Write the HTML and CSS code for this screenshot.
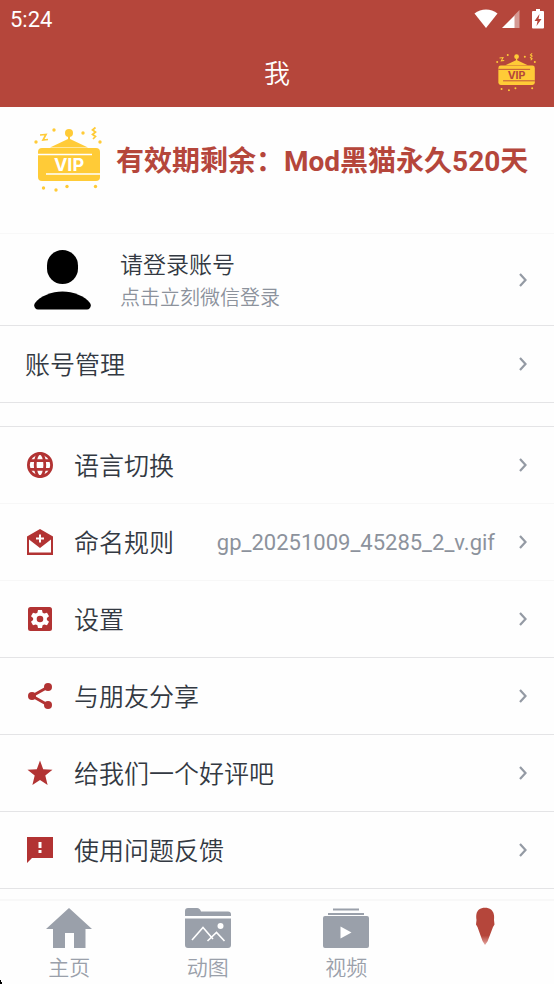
FILE: index.html
```html
<!DOCTYPE html>
<html lang="zh-CN">
<head>
<meta charset="utf-8">
<meta name="viewport" content="width=device-width, initial-scale=1">
<title>我</title>
<link rel="stylesheet" href="styles.css">
</head>
<body>
<svg class="defs" aria-hidden="true">
  <symbol id="vip" viewBox="0 0 68 66">
    <g fill="currentColor">
      <circle cx="35" cy="7" r="4"/>
      <path d="M34 10h2v3l18 8.500H16L34 13z"/>
      <rect x="4" y="22" width="62" height="33" rx="4"/>
      <circle cx="2" cy="16" r="1.700"/><circle cx="20" cy="4" r="1.700"/><circle cx="49" cy="7" r="1.700"/><circle cx="66" cy="16" r="1.700"/>
      <circle cx="9.500" cy="62" r="1.700"/><circle cx="22" cy="64" r="1.700"/><circle cx="33" cy="60.500" r="1.700"/><circle cx="61.500" cy="60.500" r="1.700"/>
    </g>
    <path d="M6 9l6-.5-3 5.500 5-.5M61.500 1.500l-3 2.500 3 2-3 2.500 3 2-2.500 2.500" fill="none" stroke="currentColor" stroke-width="1.700"/>
    <path class="vip-cut-line" d="M4 28.500h54M12 48h54"/>
  </symbol>
  <symbol id="chevron" viewBox="0 0 8 14"><path d="M1 1l5.500 6L1 13" fill="none" stroke="currentColor" stroke-width="2.200"/></symbol>
</svg>

<header class="top">
  <div class="status">
    <span>5:24</span>
    <div class="status-icons">
      <svg width="24" height="20" viewBox="0 0 24 20"><path d="M0.500 4.500C7-1 17-1 23.500 4.500L12 19z" fill="#fff"/></svg>
      <svg width="18" height="20" viewBox="0 0 18 20"><path d="M12 6.500L17.500 1v18H12z" fill="#d59a94"/><path d="M0 19L12.500 6.500V19z" fill="#fff"/></svg>
      <svg class="battery" width="12" height="20" viewBox="0 0 12 20"><path d="M4 0h4v2h3q1 0 1 1v15.500q0 1-1 1H1q-1 0-1-1V3q0-1 1-1h3z" fill="#fff"/><path d="M7.500 5L2.500 12h3L4.500 17l5-7H6.500z" fill="#b5463b"/></svg>
    </div>
  </div>
  <div class="title-bar">
    <h1>我</h1>
    <button class="vip-button" aria-label="VIP"><svg class="vip-small" viewBox="0 0 68 66"><use href="#vip"/><text class="vip-cut-text" x="35" y="44.500" text-anchor="middle">VIP</text></svg></button>
  </div>
</header>

<main>
  <section class="membership">
    <svg class="vip-large" viewBox="0 0 68 66"><use href="#vip"/><text class="vip-cut-text" x="35" y="44.500" text-anchor="middle">VIP</text></svg>
    <strong>有效期剩余：Mod黑猫永久520天</strong>
  </section>

  <a class="row account" href="#login">
    <svg class="avatar" viewBox="0 0 58 60"><rect x="13" y="0" width="31" height="34" rx="15.500"/><path d="M1 53C6 46 18 41.500 28.500 41.500S51 46 56 53C58 56 56 59.500 53 59.500H4C1 59.500-1 56 1 53z"/></svg>
    <span class="account-text"><span class="account-name">请登录账号</span><span class="account-hint">点击立刻微信登录</span></span>
    <svg class="chevron"><use href="#chevron"/></svg>
  </a>
  <a class="row" href="#manage"><span class="label">账号管理</span><svg class="chevron"><use href="#chevron"/></svg></a>

  <nav class="menu">
    <a class="row faint" href="#language">
      <svg class="icon" viewBox="0 0 26 26"><g fill="none" stroke="currentColor" stroke-width="2.800"><circle cx="13" cy="13" r="11.600"/><ellipse cx="13" cy="13" rx="4.800" ry="11.600"/><path d="M2 8.700h22M2 17.300h22"/></g></svg>
      <span class="label">语言切换</span><svg class="chevron"><use href="#chevron"/></svg>
    </a>
    <a class="row faint" href="#naming">
      <svg class="icon" viewBox="0 0 26 26"><path fill="currentColor" fill-rule="evenodd" d="M13 0l13 7.500V26H0V7.500zM2 10.500v13h22v-13L13 19zM12 5.500v3H9v2h3v3h2v-3h3v-2h-3v-3z"/></svg>
      <span class="label">命名规则</span><span class="value">gp_20251009_45285_2_v.gif</span><svg class="chevron"><use href="#chevron"/></svg>
    </a>
    <a class="row" href="#settings">
      <svg class="icon" viewBox="0 0 26 26"><rect x="1" y="1" width="24" height="24" rx="2.500" fill="currentColor"/><path fill="#fff" fill-rule="evenodd" d="M11 4h4l.6 2.700 1.600.9 2.800-.9 2 3.500-2.100 1.900v1.800l2.100 1.900-2 3.500-2.800-.9-1.600.9L15 22h-4l-.6-2.700-1.600-.9-2.800.9-2-3.500 2.100-1.900v-1.800L4 10.200l2-3.500 2.800.9 1.600-.9zM13 9.700a3.300 3.300 0 100 6.600 3.300 3.300 0 000-6.600z"/></svg>
      <span class="label">设置</span><svg class="chevron"><use href="#chevron"/></svg>
    </a>
    <a class="row" href="#share">
      <svg class="icon" viewBox="0 0 26 26"><path d="M21 4L5 13l16 9" fill="none" stroke="currentColor" stroke-width="2.800"/><g fill="currentColor"><circle cx="21" cy="4" r="4"/><circle cx="5" cy="13" r="4"/><circle cx="21" cy="22" r="4"/></g></svg>
      <span class="label">与朋友分享</span><svg class="chevron"><use href="#chevron"/></svg>
    </a>
    <a class="row" href="#rate">
      <svg class="icon" viewBox="0 0 26 26"><path fill="currentColor" d="M13 .5l3.200 8.700 9.300.5-7.200 5.900 2.300 9.400L13 20l-7.600 5 2.300-9.400L.5 9.700l9.300-.5z"/></svg>
      <span class="label">给我们一个好评吧</span><svg class="chevron"><use href="#chevron"/></svg>
    </a>
    <a class="row" href="#feedback">
      <svg class="icon" viewBox="0 0 26 26"><path fill="currentColor" fill-rule="evenodd" d="M0 0h26v21H5l-5 5zM11.500 5v6h3V5zM11.500 13v3h3v-3z"/></svg>
      <span class="label">使用问题反馈</span><svg class="chevron"><use href="#chevron"/></svg>
    </a>
  </nav>
</main>

<nav class="tabs">
  <a href="#home"><svg viewBox="0 0 46 42"><path fill="currentColor" d="M23 1l23 21h-6.500v19H28V26h-9v15H7V22H0z"/></svg>主页</a>
  <a href="#gif"><svg viewBox="0 0 46 42"><path fill="currentColor" d="M0 4q0-3 3-3h9q3 0 4 3.500h27q3 0 3 3V9H0zM0 11.500h46V38q0 3-3 3H3q-3 0-3-3z"/><circle cx="35.500" cy="19" r="3" fill="#fff"/><path d="M7 33l11-12.500L28 32M22.500 34l9-8.500 8 8.500" fill="none" stroke="#fff" stroke-width="1.600"/></svg>动图</a>
  <a href="#video"><svg viewBox="0 0 46 42"><path fill="currentColor" d="M10 1.500h26v2H10zM5 6h36v2H5zM2 9h42q2 0 2 2v28q0 2-2 2H2q-2 0-2-2V11q0-2 2-2z"/><path d="M17.500 19.500v12l11-6z" fill="#fff"/></svg>视频</a>
  <a href="#me" aria-label="我"><svg viewBox="0 0 46 42"><defs><linearGradient id="tip" x2="0" y2="1"><stop offset=".75" stop-color="#b5463b"/><stop offset="1" stop-color="#e5a8a2"/></linearGradient></defs><path fill="url(#tip)" d="M17 2.500C20 0 26 0 29 2.500 32 5 32.500 9 32 13L32.500 17.500 31 20 25.500 34.500 23 38 20.500 34 15.500 20 14 17.500 14.500 13C14 9 14 5 17 2.500z"/></svg></a>
</nav>
<svg class="corner" viewBox="0 0 3 4" aria-hidden="true"><path d="M0 0h1v2h1v2H0z"/></svg>
</body>
</html>
```
FILE: styles.css
```css
* { box-sizing: border-box; }

body {
  margin: 0;
  min-height: 100vh;
  display: flex;
  flex-direction: column;
  position: relative;
  background: #fefefe;
  color: #333942;
  font-family: Roboto, "Noto Sans CJK SC", sans-serif;
}

a { color: inherit; text-decoration: none; }
svg { display: block; flex: none; }
.defs { position: absolute; width: 0; height: 0; }

.top { background: #b5463b; color: #fff; }

.status {
  display: flex;
  justify-content: space-between;
  align-items: center;
  height: 38px;
  padding: 0 10px;
  font-size: 22px;
}
.status-icons { display: flex; gap: 4px; align-items: center; }
.battery { margin-left: 8px; }

.title-bar {
  display: grid;
  grid-template-columns: 40px 1fr 40px;
  align-items: center;
  height: 69px;
  padding: 0 18px 2px;
}
h1 { grid-column: 2; margin: 0; font-size: 26px; font-weight: 350; text-align: center; }
.vip-button { padding: 0; border: 0; background: none; color: #ffcb37; }
.vip-small { width: 40px; height: 40px; }

.vip-cut-line { fill: none; stroke: var(--cut); stroke-width: 1.5; }
.vip-cut-text { fill: var(--cut); font: 700 18px Inter, sans-serif; }
.vip-small { --cut: #b5463b; }
.vip-large { --cut: #fff; width: 68px; height: 66px; color: #ffcb37; }

.membership {
  display: flex;
  align-items: center;
  gap: 14px;
  height: 127px;
  padding: 0 20px 22px 34px;
  border-bottom: 1px solid #f8f8f8;
  color: #b5463b;
  font-size: 28px;
  white-space: nowrap;
}
.membership strong { font-weight: 700; }

.row {
  display: flex;
  align-items: center;
  height: 77px;
  padding: 0 27px 0 25px;
  border-bottom: 1px solid #e4e4e6;
}
.row.faint { border-color: #f7f7f7; }
.label { padding-bottom: 2px; font-size: 25px; font-weight: 350; }
.chevron { width: 8px; height: 14px; margin-left: auto; color: #949aa4; }
.value { margin-left: auto; color: #8c929c; font-size: 22px; }
.value + .chevron { margin-left: 24px; }

.account { height: 92px; padding-left: 34px; }
.avatar { width: 58px; height: 60px; fill: #000; }
.account-text { display: flex; flex-direction: column; margin-left: 28px; font-weight: 350; }
.account-name { font-size: 23px; line-height: 36px; }
.account-hint { font-size: 20px; line-height: 28px; color: #8c929c; }

.menu { margin-top: 23px; border-top: 1px solid #e4e4e6; }
.icon { width: 26px; height: 26px; margin: 0 21px 0 2px; color: #b23333; }

.tabs {
  display: grid;
  grid-template-columns: repeat(4, 1fr);
  margin-top: auto;
  height: 85px;
  border-top: 2px solid #f8f8f8;
}
.tabs a {
  display: flex;
  flex-direction: column;
  align-items: center;
  padding-top: 6px;
  color: #9aa0aa;
  font-size: 21px;
  font-weight: 350;
  line-height: 38px;
}
.tabs svg { width: 46px; height: 42px; }

.corner { position: absolute; left: 0; bottom: 0; width: 3px; height: 4px; }
```
